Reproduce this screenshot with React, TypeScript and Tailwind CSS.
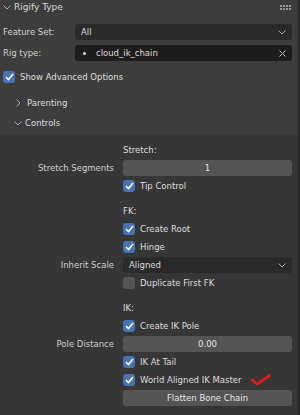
import React from "react";

const font = { fontFamily: '"DejaVu Sans", "Liberation Sans", sans-serif' };

function ChevronDown({ className }: { className?: string }) {
  return (
    <svg width="8" height="5" viewBox="0 0 8 5" className={className}>
      <path d="M0.5 0.5 L4 4 L7.5 0.5" fill="none" stroke="#a8a8a8" strokeWidth="1" />
    </svg>
  );
}

function ChevronRight() {
  return (
    <svg width="5" height="8" viewBox="0 0 5 8">
      <path d="M0.5 0.5 L4 4 L0.5 7.5" fill="none" stroke="#a8a8a8" strokeWidth="1" />
    </svg>
  );
}

function Check({ on = true }: { on?: boolean }) {
  return (
    <div
      className={`flex h-[12px] w-[12px] shrink-0 items-center justify-center rounded-[3px] ${
        on ? "bg-[#4772b3]" : "bg-[#545454]"
      }`}
    >
      {on && (
        <svg width="9" height="8" viewBox="0 0 9 8">
          <path d="M1 4.2 L3.5 6.5 L8 1" fill="none" stroke="#ffffff" strokeWidth="1.6" />
        </svg>
      )}
    </div>
  );
}

function CheckRow({ label, on = true, extra }: { label: string; on?: boolean; extra?: React.ReactNode }) {
  return (
    <div className="flex h-[18px] items-center">
      <div className="w-[123px] shrink-0" />
      <div className="flex items-center gap-[5px]">
        <Check on={on} />
        <span>{label}</span>
        {extra}
      </div>
    </div>
  );
}

function Row({ label, children }: { label?: string; children?: React.ReactNode }) {
  return (
    <div className="flex h-[18px] items-center">
      <div className="w-[123px] shrink-0 pr-[9px] text-right text-[#cfcfcf]">{label}</div>
      <div className="flex-1">{children}</div>
    </div>
  );
}

function NumField({ value }: { value: string }) {
  return (
    <div className="flex h-[16px] items-center justify-center rounded-[3px] bg-[#545454] text-[#e6e6e6]">
      {value}
    </div>
  );
}

export default function App() {
  return (
    <div className="flex h-[415px] w-[300px] bg-[#2b2b2b] text-[8.5px] text-[#dedede]" style={font}>
      <div className="flex w-[298px] flex-col">
        {/* panel header */}
        <div className="flex h-[15px] shrink-0 items-center bg-[#3d3d3d] pr-[7px] pl-[3px]">
          <ChevronDown />
          <span className="ml-[3px] text-[9px] text-[#d8d8d8]">Rigify Type</span>
          <div className="ml-auto grid grid-cols-4 gap-x-[1px] gap-y-[1px]">
            {Array.from({ length: 8 }).map((_, i) => (
              <div key={i} className="h-[2px] w-[2px] bg-[#9a9a9a]" />
            ))}
          </div>
        </div>

        {/* top panel */}
        <div className="flex h-[120px] shrink-0 flex-col bg-[#3d3d3d] pr-[6px] pl-[3px]">
          <div className="mt-[9px] flex h-[16px] items-center">
            <div className="w-[72px] shrink-0 text-[#d0d0d0]">Feature Set:</div>
            <div className="flex h-[16px] flex-1 items-center rounded-[3px] bg-[#2a2a2a] pr-[6px] pl-[6px]">
              <span>All</span>
              <ChevronDown className="ml-auto" />
            </div>
          </div>
          <div className="mt-[5px] flex h-[16px] items-center">
            <div className="w-[72px] shrink-0 text-[#d0d0d0]">Rig type:</div>
            <div className="flex h-[16px] flex-1 items-center rounded-[3px] bg-[#1d1d1d] pr-[6px] pl-[8px]">
              <div className="h-[3px] w-[3px] rounded-full bg-[#e0e0e0]" />
              <span className="ml-[10px]">cloud_ik_chain</span>
              <svg width="7" height="7" viewBox="0 0 7 7" className="ml-auto">
                <path d="M0.5 0.5 L6.5 6.5 M6.5 0.5 L0.5 6.5" stroke="#bdbdbd" strokeWidth="1" />
              </svg>
            </div>
          </div>
          <div className="mt-[7px] flex h-[18px] items-center gap-[5px]">
            <Check />
            <span>Show Advanced Options</span>
          </div>
          <div className="mt-[7px] flex h-[20px] items-center pl-[13px]">
            <ChevronRight />
            <span className="ml-[6px]">Parenting</span>
          </div>
          <div className="flex h-[21px] items-center pl-[11px]">
            <ChevronDown />
            <span className="ml-[3px]">Controls</span>
          </div>
        </div>

        {/* controls subpanel */}
        <div className="flex flex-1 flex-col bg-[#363636] pt-[6px] pr-[6px]">
          <Row>
            <span>Stretch:</span>
          </Row>
          <Row label="Stretch Segments">
            <NumField value="1" />
          </Row>
          <CheckRow label="Tip Control" />

          <div className="h-[7px]" />
          <Row>
            <span>FK:</span>
          </Row>
          <CheckRow label="Create Root" />
          <CheckRow label="Hinge" />
          <Row label="Inherit Scale">
            <div className="flex h-[16px] items-center rounded-[3px] bg-[#2a2a2a] pr-[6px] pl-[6px]">
              <span>Aligned</span>
              <ChevronDown className="ml-auto" />
            </div>
          </Row>
          <CheckRow label="Duplicate First FK" on={false} />

          <div className="h-[7px]" />
          <Row>
            <span>IK:</span>
          </Row>
          <CheckRow label="Create IK Pole" />
          <Row label="Pole Distance">
            <NumField value="0.00" />
          </Row>
          <CheckRow label="IK At Tail" />
          <CheckRow
            label="World Aligned IK Master"
            extra={
              <svg width="20" height="12" viewBox="0 0 20 12" className="ml-[4px]">
                <path d="M1.5 6 L6 10 L18.5 1.5" fill="none" stroke="#e01818" strokeWidth="3" strokeLinecap="round" strokeLinejoin="round" />
              </svg>
            }
          />
          <Row>
            <div className="flex h-[16px] items-center justify-center rounded-[3px] bg-[#545454] text-[#e6e6e6]">
              Flatten Bone Chain
            </div>
          </Row>
        </div>
      </div>
    </div>
  );
}
